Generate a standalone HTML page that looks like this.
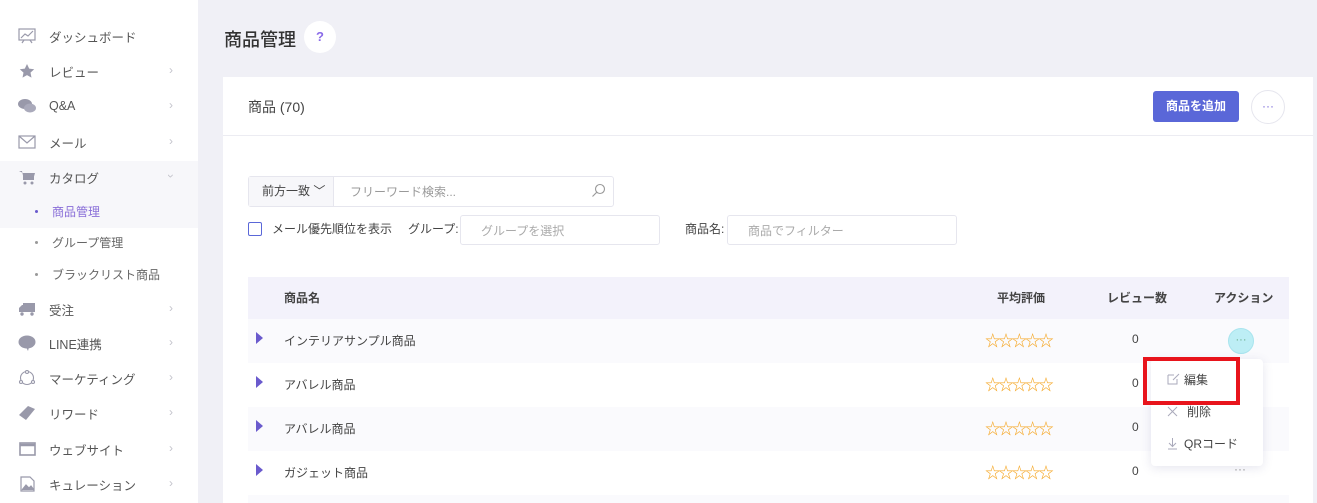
<!DOCTYPE html>
<html><head><meta charset="utf-8"><style>
*{margin:0;padding:0;box-sizing:border-box}
html,body{width:1317px;height:503px;overflow:hidden}
body{background:#f0f0f6;font-family:"Liberation Sans","Noto Sans CJK JP",sans-serif;color:#444;position:relative;font-size:12px}
.abs{position:absolute}
.side{left:0;top:0;width:198px;height:503px;background:#fff}
.it{position:absolute;left:0;width:198px;height:34px;display:flex;align-items:center;font-size:12.5px;color:#555}
.it .ic{width:18px;height:16px;margin-left:18px;margin-right:13px;display:flex;align-items:center;justify-content:center}
.it .ch{position:absolute;left:169px;top:9px;color:#c4c4cc;font-size:12px;line-height:14px}
.sub{position:absolute;left:0;width:198px;height:30px;display:flex;align-items:center;font-size:12px;color:#666}
.sub .d{width:3px;height:3px;background:#999;border-radius:50%;margin-left:35px;margin-right:14px}
.card{left:223px;top:77px;width:1090px;height:426px;background:#fff}
.row{position:absolute;left:248px;width:1041px;height:44px;font-size:12px;color:#444}
.row .tri{position:absolute;left:8px;top:13px;width:0;height:0;border-top:6px solid transparent;border-bottom:6px solid transparent;border-left:7px solid #6a5acd}
.row .nm{position:absolute;left:36px;top:13px}
.row .st{position:absolute;left:737px;top:10px;color:#f5a623;font-size:15.5px;letter-spacing:-2.2px}
.row .zz{position:absolute;left:884px;top:13px}
.inp{border:1px solid #e6e6ee;border-radius:3px;position:absolute;background:#fff;color:#aaa;font-size:12px}
</style></head><body>
<div class="abs side">
 <div class="it" style="top:19px"><span class="ic"><svg width="18" height="16" viewBox="0 0 18 16" fill="none" stroke="#99a" stroke-width="1.2"><rect x="1" y="1" width="16" height="11"/><path d="M3 10l4-4 3 2 5-5M6 12l-2 3M12 12l2 3"/></svg></span>ダッシュボード</div>
 <div class="it" style="top:54px"><span class="ic"><svg width="16" height="16" viewBox="0 0 16 16"><path d="M8 1l2.2 4.6 5 .6-3.7 3.4 1 5L8 12.1 3.5 14.6l1-5L.8 6.2l5-.6z" fill="#99a"/></svg></span>レビュー<span class="ch">›</span></div>
 <div class="it" style="top:89px"><span class="ic"><svg width="18" height="16" viewBox="0 0 18 16"><ellipse cx="7" cy="6" rx="7" ry="5" fill="#99a"/><ellipse cx="12" cy="10" rx="6" ry="4.5" fill="#aab"/></svg></span>Q&amp;A<span class="ch">›</span></div>
 <div class="it" style="top:125px"><span class="ic"><svg width="18" height="14" viewBox="0 0 18 14" fill="none" stroke="#99a" stroke-width="1.2"><rect x="1" y="1" width="16" height="12"/><path d="M1 1l8 7 8-7"/></svg></span>メール<span class="ch">›</span></div>
 <div class="abs" style="left:0;top:161px;width:198px;height:67px;background:#f7f7fa"></div>
 <div class="it" style="top:160px"><span class="ic"><svg width="18" height="16" viewBox="0 0 18 16"><path d="M1 2h3l2 9h9l2-7H5" fill="#99a"/><rect x="5" y="5" width="11" height="6" fill="#99a"/><circle cx="7" cy="14" r="1.5" fill="#99a"/><circle cx="14" cy="14" r="1.5" fill="#99a"/></svg></span>カタログ<span class="ch" style="transform:rotate(90deg)">›</span></div>
 <div class="sub" style="top:196px;color:#8a6fd8"><span class="d" style="background:#6a5acd"></span>商品管理</div>
 <div class="sub" style="top:227px"><span class="d"></span>グループ管理</div>
 <div class="sub" style="top:259px"><span class="d"></span>ブラックリスト商品</div>
 <div class="it" style="top:292px"><span class="ic"><svg width="18" height="14" viewBox="0 0 18 14"><rect x="5" y="1" width="12" height="9" fill="#99a"/><path d="M1 6l3-3h2v7H1z" fill="#99a"/><circle cx="4" cy="12" r="1.7" fill="#99a"/><circle cx="14" cy="12" r="1.7" fill="#99a"/></svg></span>受注<span class="ch">›</span></div>
 <div class="it" style="top:326px"><span class="ic"><svg width="18" height="16" viewBox="0 0 18 16"><ellipse cx="9" cy="7" rx="8.5" ry="6.5" fill="#99a"/><path d="M8 12l2 4 1-4z" fill="#99a"/></svg></span>LINE連携<span class="ch">›</span></div>
 <div class="it" style="top:361px"><span class="ic"><svg width="18" height="16" viewBox="0 0 18 16" fill="none" stroke="#99a" stroke-width="1.1"><circle cx="9" cy="8" r="6.5"/><circle cx="9" cy="2" r="1.5" fill="#fff"/><circle cx="3" cy="12" r="1.5" fill="#fff"/><circle cx="15" cy="12" r="1.5" fill="#fff"/></svg></span>マーケティング<span class="ch">›</span></div>
 <div class="it" style="top:396px"><span class="ic"><svg width="18" height="16" viewBox="0 0 18 16"><path d="M1 10l9-9 7 3-9 11z" fill="#99a"/></svg></span>リワード<span class="ch">›</span></div>
 <div class="it" style="top:432px"><span class="ic"><svg width="17" height="14" viewBox="0 0 17 14" fill="none" stroke="#99a" stroke-width="1.6"><rect x="1" y="1" width="15" height="12"/><path d="M1 3h15" stroke-width="2.5"/></svg></span>ウェブサイト<span class="ch">›</span></div>
 <div class="it" style="top:467px"><span class="ic"><svg width="15" height="16" viewBox="0 0 15 16" fill="none" stroke="#99a" stroke-width="1.2"><path d="M1 1h9l4 4v10H1z"/><path d="M2 14l4-5 3 3 2-2 3 4" fill="#99a"/></svg></span>キュレーション<span class="ch">›</span></div>
</div>

<div class="abs" style="left:224px;top:26px;font-size:18px;color:#333;font-weight:500">商品管理</div>
<div class="abs" style="left:304px;top:21px;width:32px;height:32px;border-radius:50%;background:#fff;color:#8a6be8;font-weight:bold;font-size:13px;text-align:center;line-height:32px">?</div>

<div class="abs card"></div>
<div class="abs" style="left:248px;top:97px;font-size:14px;color:#444">商品 (70)</div>
<div class="abs" style="left:1153px;top:91px;width:86px;height:31px;background:#5a67d8;border-radius:3px;color:#fff;font-size:12px;text-align:center;line-height:31px;font-weight:bold">商品を追加</div>
<div class="abs" style="left:1251px;top:90px;width:34px;height:34px;border:1px solid #e6e6ee;border-radius:50%;color:#7b6bd8;text-align:center;line-height:30px;font-size:12px">···</div>
<div class="abs" style="left:223px;top:135px;width:1090px;height:1px;background:#ececf2"></div>

<div class="inp" style="left:248px;top:176px;width:366px;height:31px"></div>
<div class="abs" style="left:249px;top:177px;width:85px;height:29px;background:#f7f7fa;border-right:1px solid #e6e6ee;font-size:12px;color:#444;line-height:28px;padding-left:13px">前方一致 ﹀</div>
<div class="abs" style="left:350px;top:183px;color:#999;font-size:12px">フリーワード検索...</div>
<svg class="abs" style="left:591px;top:183px" width="15" height="15" viewBox="0 0 15 15" fill="none" stroke="#999" stroke-width="1.1"><circle cx="9" cy="6" r="4.5"/><path d="M5.8 9.2L1.5 13.5"/></svg>

<div class="abs" style="left:248px;top:222px;width:14px;height:14px;border:1.3px solid #5a67d8;border-radius:2px"></div>
<div class="abs" style="left:272px;top:220px;font-size:12px;color:#444">メール優先順位を表示</div>
<div class="abs" style="left:408px;top:220px;font-size:12px;color:#444">グループ:</div>
<div class="inp" style="left:460px;top:215px;width:200px;height:30px;padding:6px 0 0 20px">グループを選択</div>
<div class="abs" style="left:685px;top:220px;font-size:12px;color:#444">商品名:</div>
<div class="inp" style="left:727px;top:215px;width:230px;height:30px;padding:6px 0 0 20px">商品でフィルター</div>

<div class="abs" style="left:248px;top:277px;width:1041px;height:42px;background:#f3f2fb;font-size:12px;color:#444;font-weight:bold">
 <span class="abs" style="left:36px;top:12px">商品名</span>
 <span class="abs" style="left:749px;top:12px">平均評価</span>
 <span class="abs" style="left:859px;top:12px">レビュー数</span>
 <span class="abs" style="left:966px;top:12px">アクション</span>
</div>
<div class="row" style="top:319px;background:#fafafd"><span class="tri"></span><span class="nm">インテリアサンプル商品</span><span class="st">☆☆☆☆☆</span><span class="zz">0</span></div>
<div class="row" style="top:363px"><span class="tri"></span><span class="nm">アバレル商品</span><span class="st">☆☆☆☆☆</span><span class="zz">0</span></div>
<div class="row" style="top:407px;background:#fafafd"><span class="tri"></span><span class="nm">アバレル商品</span><span class="st">☆☆☆☆☆</span><span class="zz">0</span></div>
<div class="row" style="top:451px"><span class="tri"></span><span class="nm">ガジェット商品</span><span class="st">☆☆☆☆☆</span><span class="zz">0</span><span class="abs" style="left:986px;top:11px;color:#999">···</span></div>
<div class="row" style="top:495px;height:8px;background:#fafafd"></div>

<div class="abs" style="left:1228px;top:328px;width:26px;height:26px;border-radius:50%;background:#bdeef5;border:1px solid #a8e4ee;color:#6a8;text-align:center;line-height:22px;font-size:11px">···</div>

<div class="abs" style="left:1151px;top:359px;width:112px;height:107px;background:#fff;border-radius:4px;box-shadow:0 2px 10px rgba(80,80,140,.15)"></div>
<svg class="abs" style="left:1167px;top:373px" width="13" height="12" viewBox="0 0 13 12" fill="none" stroke="#aab" stroke-width="1"><path d="M1 2h6M1 2v9h9V6M6 7l6-6"/></svg>
<div class="abs" style="left:1184px;top:371px;font-size:12px;color:#444">編集</div>
<svg class="abs" style="left:1167px;top:406px" width="11" height="11" viewBox="0 0 11 11" stroke="#aab" stroke-width="1"><path d="M1 1l9 9M10 1l-9 9"/></svg>
<div class="abs" style="left:1187px;top:403px;font-size:12px;color:#444">削除</div>
<svg class="abs" style="left:1167px;top:437px" width="11" height="13" viewBox="0 0 11 13" fill="none" stroke="#aab" stroke-width="1"><path d="M5.5 1v8M2 6l3.5 3.5L9 6M1 12h9"/></svg>
<div class="abs" style="left:1184px;top:435px;font-size:12px;color:#444">QRコード</div>
<div class="abs" style="left:1143px;top:357px;width:97px;height:48px;border:4px solid #e8141c"></div>
</body></html>
